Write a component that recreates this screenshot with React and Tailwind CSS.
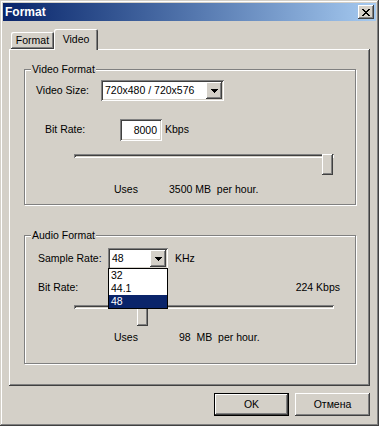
import React from 'react';

const raised = 'bg-[#d4d0c8] shadow-[inset_-1px_-1px_#404040,inset_1px_1px_#fff,inset_-2px_-2px_#808080]';
const sunken = 'bg-white shadow-[inset_1px_1px_#808080,inset_-1px_-1px_#fff,inset_2px_2px_#404040,inset_-2px_-2px_#d4d0c8]';

const CloseGlyph = () => (
  <svg width="8" height="7" viewBox="0 0 8 7" shapeRendering="crispEdges">
    <path fill="#000" d="M0 0h2v1h-2zM6 0h2v1h-2zM1 1h2v1h-2zM5 1h2v1h-2zM2 2h4v1h-4zM3 3h2v1h-2zM2 4h4v1h-4zM1 5h2v1h-2zM5 5h2v1h-2zM0 6h2v1h-2zM6 6h2v1h-2z" />
  </svg>
);

const Arrow = () => (
  <svg width="7" height="4" viewBox="0 0 7 4" shapeRendering="crispEdges">
    <path fill="#000" d="M0 0h7v1h-7zM1 1h5v1h-5zM2 2h3v1h-3zM3 3h1v1h-1z" />
  </svg>
);

const Combo = ({ value, width, children }) => (
  <div className={`relative flex h-[21px] p-[2px] ${sunken} ${width}`}>
    <div className="flex-1 pl-[2px] leading-[17px] whitespace-nowrap overflow-hidden">{value}</div>
    <div className={`w-[16px] h-[17px] flex items-center justify-center ${raised}`}><Arrow /></div>
    {children}
  </div>
);

const GroupBox = ({ title, height, children }) => (
  <div className={`relative w-[332px] border border-[#808080] shadow-[1px_1px_0_#fff,inset_1px_1px_0_#fff] ${height}`}>
    <span className="absolute left-[6px] top-[-7px] bg-[#d4d0c8] px-[1px] leading-[13px]">{title}</span>
    {children}
  </div>
);

const Slider = ({ thumb }) => (
  <div className="relative ml-[49px] w-[260px] h-[21px]">
    <div className="mt-[8px] h-[4px] bg-[#d4d0c8] shadow-[inset_1px_1px_#808080,inset_-1px_-1px_#fff,inset_2px_2px_#404040]" />
    <div className={`absolute top-0 w-[11px] h-[21px] ${raised}`} style={{ left: thumb }} />
  </div>
);

export default function App() {
  return (
    <div className="w-[379px] h-[426px] bg-[#d4d0c8] p-[3px] flex flex-col text-[10.5px] text-black font-['Liberation_Sans',Arial,sans-serif] shadow-[inset_-1px_-1px_#404040,inset_1px_1px_#d4d0c8,inset_-2px_-2px_#808080,inset_2px_2px_#fff]">
      {/* title bar */}
      <div className="h-[18px] flex items-center justify-between pl-[2px] pr-[2px] bg-gradient-to-r from-[#0a246a] to-[#a6caf0]">
        <span className="text-white font-bold text-[12px] leading-[18px]">Format</span>
        <div className={`w-[16px] h-[14px] flex items-center justify-center ${raised}`}><CloseGlyph /></div>
      </div>

      <div className="px-[6px]">
        {/* tabs */}
        <div className="mt-[8px] h-[20px] flex items-end pl-[2px]">
          <div className={`w-[43px] h-[17px] rounded-t-[2px] pt-[2px] text-center leading-[13px] ${raised}`}>Format</div>
          <div className="relative z-10 w-[44px] h-[21px] mb-[-1px] rounded-t-[2px] bg-[#d4d0c8] text-center leading-[20px] shadow-[inset_1px_1px_#fff,inset_-1px_0_#404040,inset_-2px_0_#808080]">Video</div>
        </div>

        {/* panel */}
        <div className="h-[337px] pt-[20px] pl-[15px] shadow-[inset_-1px_-1px_#404040,inset_1px_1px_#fff,inset_-2px_-2px_#808080]">
          <GroupBox title="Video Format" height="h-[136px]">
            <div className="mt-[10px] h-[21px] flex items-center pl-[11px]">
              <span className="w-[65px]">Video Size:</span>
              <Combo value="720x480 / 720x576" width="w-[123px]" />
            </div>
            <div className="mt-[18px] h-[22px] flex items-center pl-[20px]">
              <span className="w-[75px]">Bit Rate:</span>
              <div className={`w-[42px] h-[22px] pr-[5px] text-right leading-[22px] ${sunken}`}>8000</div>
              <span className="ml-[3px]">Kbps</span>
            </div>
            <div className="mt-[13px]"><Slider thumb={248} /></div>
            <div className="mt-[8px] h-[13px] leading-[13px] flex pl-[89px]">
              <span className="w-[55px]">Uses</span>
              <span className="whitespace-pre">3500 MB  per hour.</span>
            </div>
          </GroupBox>

          <div className="mt-[30px]">
            <GroupBox title="Audio Format" height="h-[129px]">
              <div className="mt-[12px] h-[21px] flex items-center pl-[13px]">
                <span className="w-[70px]">Sample Rate:</span>
                <Combo value="48" width="w-[60px]">
                  <div className="absolute left-0 top-[20px] z-20 w-[60px] border border-black bg-white">
                    <div className="h-[13px] leading-[13px] pl-[2px]">32</div>
                    <div className="h-[13px] leading-[13px] pl-[2px]">44.1</div>
                    <div className="h-[13px] leading-[13px] pl-[2px] bg-[#0a246a] text-white">48</div>
                  </div>
                </Combo>
                <span className="ml-[7px]">KHz</span>
              </div>
              <div className="mt-[12px] h-[13px] leading-[13px] flex justify-between pl-[13px] pr-[15px]">
                <span>Bit Rate:</span>
                <span>224 Kbps</span>
              </div>
              <div className="mt-[11px]"><Slider thumb={63} /></div>
              <div className="mt-[5px] h-[13px] leading-[13px] flex pl-[89px]">
                <span className="w-[65px]">Uses</span>
                <span className="whitespace-pre">98  MB  per hour.</span>
              </div>
            </GroupBox>
          </div>
        </div>

        {/* buttons */}
        <div className="mt-[7px] flex justify-end gap-[6px]">
          <div className="w-[75px] h-[23px] border border-black">
            <div className={`w-full h-full flex items-center justify-center ${raised}`}>OK</div>
          </div>
          <div className={`w-[75px] h-[23px] flex items-center justify-center ${raised}`}>Отмена</div>
        </div>
      </div>
    </div>
  );
}
